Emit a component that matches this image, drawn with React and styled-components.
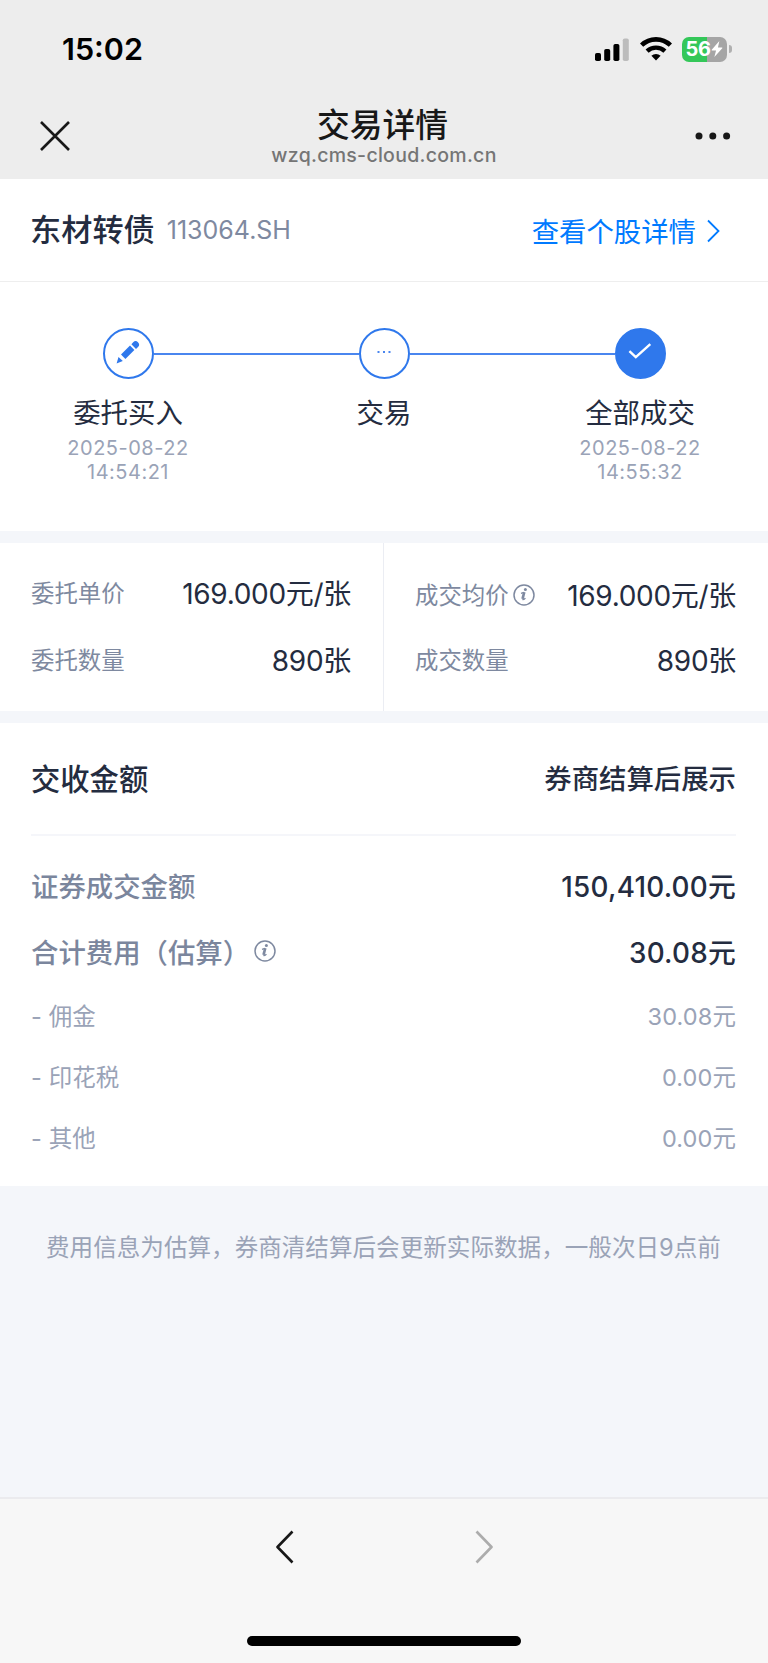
import React from "react";
import styled, { createGlobalStyle } from "styled-components";

const GlobalStyle = createGlobalStyle`
  * {
    box-sizing: border-box;
  }
  body {
    margin: 0;
    background-color: #f4f6fa;
    font-family: Inter, "Noto Sans CJK SC", sans-serif;
    color: #242c40;
  }
  svg {
    display: block;
    flex: none;
  }
`;

const Page = styled.div`
  width: 100%;
  height: 1663px;
  display: flex;
  flex-direction: column;
  white-space: nowrap;
`;

const Header = styled.header`
  height: 179px;
  background-color: #ededed;
  color: #181818;
`;

const StatusBar = styled.div`
  height: 98px;
  padding: 0 36px 0 62px;
  display: flex;
  align-items: center;
  justify-content: space-between;
`;

const Time = styled.span`
  padding-bottom: 2px;
  font-size: 30.5px;
  font-weight: 600;
  letter-spacing: 0;
  color: #000000;
`;

const StatusIcons = styled.div`
  display: flex;
  align-items: center;
  gap: 10.5px;
`;

const Battery = styled.div`
  display: flex;
  align-items: center;
  gap: 2px;
`;

const BatteryBody = styled.div`
  width: 45px;
  height: 25px;
  border-radius: 7px;
  display: flex;
  align-items: center;
  justify-content: center;
  gap: 1px;
  font-size: 20px;
  font-weight: 700;
  letter-spacing: -0.4px;
  color: #ffffff;
  background: linear-gradient(to right, #34c759 56%, #a5a5a5 56%);
`;

const BatteryTip = styled.div`
  width: 3px;
  height: 8px;
  border-radius: 0 4px 4px 0;
  background-color: #b0b0b0;
`;

const NavBar = styled.div`
  height: 76px;
  padding: 0 37px 0 40px;
  display: grid;
  grid-template-columns: 60px 1fr 63px;
  align-items: center;
  > :last-child {
    justify-self: end;
  }
`;

const NavTitle = styled.div`
  padding-top: 4px;
  text-align: center;
`;

const Title = styled.div`
  padding-right: 3px;
  font-size: 32.8px;
  line-height: 34px;
  font-weight: 500;
`;

const Url = styled.div`
  font-size: 19.5px;
  line-height: 26px;
  font-weight: 500;
  letter-spacing: 0.28px;
  color: #757575;
`;

const StockBar = styled.section`
  height: 103px;
  padding: 0 48px 0 30px;
  display: flex;
  align-items: center;
  justify-content: space-between;
  background-color: #ffffff;
  border-bottom: 1px solid #eeeeee;
`;

const Stock = styled.div`
  display: flex;
  align-items: center;
  gap: 12px;
`;

const StockName = styled.h1`
  margin: 0;
  padding-bottom: 5px;
  font-size: 31.2px;
  font-weight: 500;
`;

const StockCode = styled.span`
  font-size: 25px;
  color: #7e89a0;
`;

const DetailLink = styled.a`
  display: flex;
  align-items: center;
  gap: 11px;
  font-size: 27.4px;
  color: #007aff;
  svg {
    margin-top: 2px;
  }
`;

const Steps = styled.section`
  height: 249px;
  padding-top: 46px;
  display: grid;
  grid-template-columns: repeat(3, 1fr);
  background-color: #ffffff;
`;

const Step = styled.div`
  display: flex;
  flex-direction: column;
  align-items: center;
`;

const StepTrack = styled.div`
  width: 100%;
  display: flex;
  align-items: center;
`;

const StepLine = styled.div`
  flex: 1;
  height: 2px;
  background-color: ${(props) => (props.$hidden ? "transparent" : "#4a86ef")};
`;

const StepCircle = styled.div`
  width: 51px;
  height: 51px;
  border: 2px solid #2f78ec;
  border-radius: 50%;
  display: flex;
  align-items: center;
  justify-content: center;
  background-color: ${(props) => (props.$done ? "#2f78ec" : "#ffffff")};
`;

const StepLabel = styled.div`
  margin-top: 16px;
  font-size: 27.4px;
  line-height: 36px;
`;

const StepTime = styled.div`
  margin-top: 5px;
  width: 130px;
  font-size: 20px;
  line-height: 24px;
  letter-spacing: 0.5px;
  text-align: center;
  white-space: normal;
  color: #9aa3b7;
`;

const Stats = styled.section`
  margin: 12px 0;
  height: 168px;
  display: grid;
  grid-template-columns: 1fr 1fr;
  background-color: #ffffff;
`;

const StatColumn = styled.div`
  padding: 15px 32px 0 31px;
  border-right: ${(props) => (props.$divided ? "1px solid #ebedf3" : "none")};
`;

const StatRow = styled.div`
  height: 67px;
  padding-top: ${(props) => (props.$lowered ? "4px" : "0")};
  display: flex;
  align-items: center;
  justify-content: space-between;
`;

const StatLabel = styled.span`
  display: flex;
  align-items: center;
  gap: 4px;
  font-size: 23.4px;
  color: #7e89a0;
  svg {
    margin-top: 3px;
  }
`;

const StatValue = styled.span`
  font-size: 28px;
  letter-spacing: -0.3px;
`;

const Settlement = styled.section`
  height: 463px;
  padding: 0 32px 0 31px;
  background-color: #ffffff;
`;

const Total = styled.div`
  height: 113px;
  padding-bottom: 3px;
  display: flex;
  align-items: center;
  justify-content: space-between;
  border-bottom: 2px solid #f5f6fa;
  font-weight: 500;
`;

const TotalLabel = styled.span`
  font-size: 29.3px;
`;

const TotalValue = styled.span`
  font-size: 27.4px;
`;

const Amounts = styled.div`
  padding-top: 16px;
`;

const AmountRow = styled.div`
  height: 66px;
  display: flex;
  align-items: center;
  justify-content: space-between;
  font-size: 27.4px;
  font-weight: 500;
`;

const AmountLabel = styled.span`
  display: flex;
  align-items: center;
  gap: 4px;
  color: #7b869d;
`;

const AmountValue = styled.span`
  font-size: 27.8px;
  letter-spacing: 0.25px;
`;

const FeeRow = styled.div`
  height: 61px;
  display: flex;
  align-items: center;
  justify-content: space-between;
  font-size: 23.5px;
  letter-spacing: 0.1px;
  color: #9aa3b7;
`;

const Note = styled.p`
  margin: 0;
  padding: 45px 46px 0;
  flex: 1;
  font-size: 23.58px;
  line-height: 34px;
  color: #9aa3b7;
`;

const Footer = styled.footer`
  height: 166px;
  padding: 31px 0 17px;
  display: flex;
  flex-direction: column;
  align-items: center;
  justify-content: space-between;
  background-color: #f7f7f7;
  border-top: 2px solid #ebebee;
`;

const FooterNav = styled.div`
  display: flex;
  gap: 181px;
`;

const HomeIndicator = styled.div`
  width: 274px;
  height: 10px;
  border-radius: 5px;
  background-color: #000000;
`;

function SignalIcon() {
  return (
    <svg width="34" height="23" viewBox="0 0 34 23">
      <rect x="0" y="15" width="6" height="8" rx="1.8" />
      <rect x="9.2" y="11" width="6" height="12" rx="1.8" />
      <rect x="18.4" y="6" width="6" height="17" rx="1.8" />
      <rect x="27.8" y="0.5" width="6" height="22.5" rx="1.8" fill="#bcbcbc" />
    </svg>
  );
}

function WifiIcon() {
  return (
    <svg width="32" height="24" viewBox="0 0 32 24" fill="none" stroke="#000000">
      <path d="M1.6 8.2a20.6 20.6 0 0 1 28.8 0" strokeWidth="4.6" />
      <path d="M7.1 14.2a12.9 12.9 0 0 1 17.8 0" strokeWidth="4.4" />
      <path d="M16 23.5l-4.6-4.7a6.6 6.6 0 0 1 9.2 0z" fill="#000000" stroke="none" />
    </svg>
  );
}

function BoltIcon() {
  return (
    <svg width="12" height="16" viewBox="0 0 12 17" fill="#ffffff">
      <path d="M8.5 0L0.4 9.2q-.5.7.4.8H5L3.2 17l8.4-9.3q.5-.7-.4-.8H7z" />
    </svg>
  );
}

function CloseIcon() {
  return (
    <svg width="30" height="30" viewBox="0 0 30 30" stroke="#181818" strokeWidth="2.6">
      <path d="M1 1l28 28M29 1L1 29" />
    </svg>
  );
}

function MoreIcon() {
  return (
    <svg width="36" height="8" viewBox="0 0 36 8" fill="#181818">
      <circle cx="4" cy="4" r="3.5" />
      <circle cx="17.8" cy="4" r="3.5" />
      <circle cx="31.6" cy="4" r="3.5" />
    </svg>
  );
}

function PencilIcon() {
  return (
    <svg width="24" height="30" viewBox="0 -3 24 30" fill="#2f78ec">
      <path d="M5 12.6L14 3.6l4.4 4.4-9 9z" />
      <path d="M15.4 2.3l1.8-2a3.3 3.3 0 0 1 4.8 4.7l-2 1.9z" />
      <path d="M2.5 14.9l4.3 4.2-6.2 2.4z" />
    </svg>
  );
}

function DotsIcon() {
  return (
    <svg width="14" height="6" viewBox="0 0 14 6" fill="#4a86ef">
      <rect x="0.5" y="0" width="2" height="2" />
      <rect x="6" y="0" width="2" height="2" />
      <rect x="11.5" y="0" width="2" height="2" />
    </svg>
  );
}

function CheckIcon() {
  return (
    <svg width="24" height="21" viewBox="0 0 24 21" fill="none" stroke="#ffffff" strokeWidth="2.4">
      <path d="M1.4 8.2L7.8 14.2 22.3 1.2" />
    </svg>
  );
}

function InfoIcon() {
  return (
    <svg width="22" height="22" viewBox="0 0 22 22" fill="none" stroke="#7e89a0">
      <circle cx="11" cy="11" r="10" strokeWidth="1.5" />
      <path d="M8 9.4l2.2-.8" strokeWidth="1.2" />
      <path d="M11.3 8.2l-1.8 6.6" strokeWidth="2.6" />
      <path d="M9.4 15.4q1.6.6 3-1.2" strokeWidth="1.3" />
      <circle cx="12.4" cy="5.5" r="1.5" fill="#7e89a0" stroke="none" />
    </svg>
  );
}

function LinkChevron() {
  return (
    <svg width="13" height="24" viewBox="0 0 13 24" fill="none" stroke="#007aff" strokeWidth="1.8">
      <path d="M1 1.5L11.5 12 1 22.5" />
    </svg>
  );
}

function NavChevron({ forward }) {
  return (
    <svg
      width="18"
      height="34"
      viewBox="0 0 18 34"
      fill="none"
      stroke={forward ? "#acacac" : "#181818"}
      strokeWidth="2.6"
      strokeLinejoin="round"
    >
      <path d={forward ? "M1.5 1.5L16.5 17 1.5 32.5" : "M16.5 1.5L1.5 17 16.5 32.5"} />
    </svg>
  );
}

const fees = [
  { name: "佣金", amount: "30.08元" },
  { name: "印花税", amount: "0.00元" },
  { name: "其他", amount: "0.00元" },
];

function App() {
  return (
    <Page>
      <GlobalStyle />
      <Header>
        <StatusBar>
          <Time>15:02</Time>
          <StatusIcons>
            <SignalIcon />
            <WifiIcon />
            <Battery>
              <BatteryBody>56<BoltIcon /></BatteryBody>
              <BatteryTip />
            </Battery>
          </StatusIcons>
        </StatusBar>
        <NavBar>
          <CloseIcon />
          <NavTitle>
            <Title>交易详情</Title>
            <Url>wzq.cms-cloud.com.cn</Url>
          </NavTitle>
          <MoreIcon />
        </NavBar>
      </Header>

      <StockBar>
        <Stock>
          <StockName>东材转债</StockName>
          <StockCode>113064.SH</StockCode>
        </Stock>
        <DetailLink>
          查看个股详情
          <LinkChevron />
        </DetailLink>
      </StockBar>

      <Steps>
        <Step>
          <StepTrack>
            <StepLine $hidden />
            <StepCircle><PencilIcon /></StepCircle>
            <StepLine />
          </StepTrack>
          <StepLabel>委托买入</StepLabel>
          <StepTime>2025-08-22 14:54:21</StepTime>
        </Step>
        <Step>
          <StepTrack>
            <StepLine />
            <StepCircle><DotsIcon /></StepCircle>
            <StepLine />
          </StepTrack>
          <StepLabel>交易</StepLabel>
        </Step>
        <Step>
          <StepTrack>
            <StepLine />
            <StepCircle $done><CheckIcon /></StepCircle>
            <StepLine $hidden />
          </StepTrack>
          <StepLabel>全部成交</StepLabel>
          <StepTime>2025-08-22 14:55:32</StepTime>
        </Step>
      </Steps>

      <Stats>
        <StatColumn $divided>
          <StatRow>
            <StatLabel>委托单价</StatLabel>
            <StatValue>169.000元/张</StatValue>
          </StatRow>
          <StatRow>
            <StatLabel>委托数量</StatLabel>
            <StatValue>890张</StatValue>
          </StatRow>
        </StatColumn>
        <StatColumn>
          <StatRow $lowered>
            <StatLabel>成交均价<InfoIcon /></StatLabel>
            <StatValue>169.000元/张</StatValue>
          </StatRow>
          <StatRow>
            <StatLabel>成交数量</StatLabel>
            <StatValue>890张</StatValue>
          </StatRow>
        </StatColumn>
      </Stats>

      <Settlement>
        <Total>
          <TotalLabel>交收金额</TotalLabel>
          <TotalValue>券商结算后展示</TotalValue>
        </Total>
        <Amounts>
          <AmountRow>
            <AmountLabel>证券成交金额</AmountLabel>
            <AmountValue>150,410.00元</AmountValue>
          </AmountRow>
          <AmountRow>
            <AmountLabel>合计费用（估算）<InfoIcon /></AmountLabel>
            <AmountValue>30.08元</AmountValue>
          </AmountRow>
          {fees.map((fee) => (
            <FeeRow key={fee.name}>
              <span>- {fee.name}</span>
              <span>{fee.amount}</span>
            </FeeRow>
          ))}
        </Amounts>
      </Settlement>

      <Note>费用信息为估算，券商清结算后会更新实际数据，一般次日9点前</Note>

      <Footer>
        <FooterNav>
          <NavChevron />
          <NavChevron forward />
        </FooterNav>
        <HomeIndicator />
      </Footer>
    </Page>
  );
}

export default App;
